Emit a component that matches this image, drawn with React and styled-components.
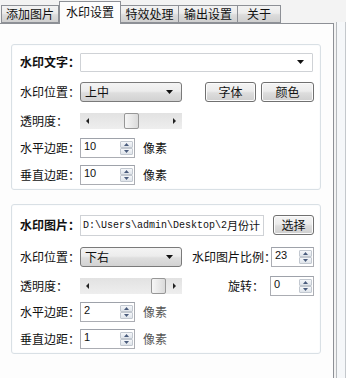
import React from "react";
import styled, { createGlobalStyle } from "styled-components";

const GlobalStyle = createGlobalStyle`
  html, body { margin: 0; padding: 0; background: #f3f3f3; }
  body {
    font-family: "Noto Sans CJK SC", "Liberation Sans", sans-serif;
    font-size: 12px;
    color: #111;
  }
  * { box-sizing: border-box; }
`;

const Root = styled.div`
  width: 346px;
  height: 378px;
  display: flex;
  overflow: hidden;
  background: #f3f3f3;
`;

const Main = styled.div`
  width: 334px;
  display: flex;
  flex-direction: column;
`;

const TabBar = styled.div`
  height: 23px;
  display: flex;
  align-items: flex-end;
  padding-left: 1px;
`;

const Tab = styled.div`
  position: relative;
  z-index: ${(p) => (p.$active ? 2 : 1)};
  width: ${(p) => p.$w}px;
  height: ${(p) => (p.$active ? 23 : 18)}px;
  margin-bottom: ${(p) => (p.$active ? -1 : 0)}px;
  border: 1px solid #8d9096;
  border-bottom: ${(p) => (p.$active ? "none" : "1px solid #8d9096")};
  border-left: ${(p) => (p.$first || p.$active ? "1px solid #8d9096" : "none")};
  background: ${(p) =>
    p.$active ? "#fdfdfd" : "linear-gradient(#f3f3f3 0%, #ebebeb 45%, #dcdcdc 55%, #cfcfcf 100%)"};
  display: flex;
  align-items: center;
  justify-content: center;
  padding-bottom: ${(p) => (p.$active ? 3 : 0)}px;
  font-size: 12px;
  line-height: 14px;
  color: #111;
  white-space: nowrap;
`;

const Panel = styled.div`
  flex: 1;
  background: #fdfdfd;
  border-top: 1px solid #8d9096;
  border-right: 1px solid #8d9096;
  padding: 20px 0 0 11px;
`;

const Strip = styled.div`
  flex: 1;
  margin: 22px 0 0 2px;
  border-left: 1px solid #b5b9bd;
  border-right: 1px solid #c4c8cc;
  background: #f5f7f9;
`;

const Group = styled.div`
  width: 310px;
  margin-top: ${(p) => p.$mt || 0}px;
  border: 1px solid #d9e0e5;
  border-radius: 3px;
  background: #ffffff;
  box-shadow: inset 0 0 0 1px #fbfcfd;
  padding: ${(p) => p.$pt}px 6px 3px 8px;
`;

const Row = styled.div`
  display: flex;
  align-items: center;
  height: 22px;
  margin-top: ${(p) => p.$mt || 0}px;
`;

const Label = styled.div`
  width: ${(p) => p.$w || 60}px;
  flex: none;
  font-size: 12px;
  line-height: 14px;
  font-weight: ${(p) => (p.$bold ? 700 : 400)};
  color: #111;
  white-space: nowrap;
  margin-right: ${(p) => p.$mr || 0}px;
`;

const RightPart = styled.div`
  flex: 1;
  display: flex;
  align-items: center;
  justify-content: flex-end;
`;

const Combo = styled.div`
  width: ${(p) => p.$w}px;
  height: ${(p) => p.$h || 20}px;
  flex: none;
  display: flex;
  align-items: center;
  justify-content: space-between;
  padding: 0 8px 0 4px;
  border: 1px solid ${(p) => (p.$plain ? "#cfd2d6" : "#7a7a7a")};
  border-radius: ${(p) => (p.$plain ? 1 : 3)}px;
  background: ${(p) =>
    p.$plain ? "#ffffff" : "linear-gradient(#f4f4f4 0%, #ececec 45%, #dedede 55%, #d2d2d2 100%)"};
  font-size: 12px;
  line-height: 14px;
`;

const Arrow = () => (
  <svg width="7" height="4" viewBox="0 0 7 4">
    <path d="M0 0 H7 L3.5 4 Z" fill="#111" />
  </svg>
);

const Button = styled.div`
  width: ${(p) => p.$w}px;
  height: 20px;
  flex: none;
  margin-left: ${(p) => p.$ml || 0}px;
  border: 1px solid #707070;
  border-radius: 3px;
  background: linear-gradient(#f4f4f4 0%, #ececec 45%, #dddddd 55%, #cfcfcf 100%);
  box-shadow: inset 0 0 0 1px #fbfbfb;
  display: flex;
  align-items: center;
  justify-content: center;
  font-size: 12px;
  line-height: 14px;
`;

const Slider = styled.div`
  position: relative;
  width: 102px;
  height: 16px;
  flex: none;
  background: linear-gradient(#e2e2e2, #eeeeee);
  display: flex;
  align-items: center;
  justify-content: space-between;
  padding: 0 6px;
`;

const Thumb = styled.div`
  position: absolute;
  top: 0;
  width: 15px;
  height: 16px;
  border: 1px solid #979797;
  border-radius: 2px;
  background: linear-gradient(90deg, #f6f6f6, #e6e6e6 60%, #dadada);
`;

const SmallTri = ({ dir }) => (
  <svg width="3" height="6" viewBox="0 0 3 6">
    <path d={dir === "left" ? "M3 0 V6 L0 3 Z" : "M0 0 V6 L3 3 Z"} fill="#222" />
  </svg>
);

const Spin = styled.div`
  width: ${(p) => p.$w}px;
  height: 20px;
  flex: none;
  border: 1px solid #abadb3;
  border-top-color: #9ea2aa;
  background: #fff;
  display: flex;
  align-items: stretch;
`;

const SpinValue = styled.div`
  flex: 1;
  padding: 1px 0 0 3px;
  font-family: "Liberation Sans", sans-serif;
  font-size: 11px;
  line-height: 13px;
  color: #111;
`;

const SpinButtons = styled.div`
  width: 13px;
  margin: 2px 1px 2px 0;
  display: flex;
  flex-direction: column;
  gap: 0;
`;

const SpinBtn = styled.div`
  flex: 1;
  border: 1px solid #c2c8d0;
  border-radius: 1px;
  background: linear-gradient(#f5f7fa, #dfe4ea);
  display: flex;
  align-items: center;
  justify-content: center;
`;

const SpinTri = ({ up }) => (
  <svg width="5" height="3" viewBox="0 0 5 3">
    <path d={up ? "M0 3 H5 L2.5 0 Z" : "M0 0 H5 L2.5 3 Z"} fill="#4a5c7c" />
  </svg>
);

const Unit = styled.div`
  margin-left: 8px;
  font-size: 12px;
  line-height: 14px;
  color: ${(p) => (p.$faded ? "#555" : "#111")};
`;

const PathField = styled.div`
  width: 184px;
  height: 21px;
  flex: none;
  border: 1px solid #cfd2d6;
  background: #fff;
  display: flex;
  align-items: center;
  padding-left: 2px;
  overflow: hidden;
  white-space: nowrap;
  font-family: "Liberation Mono", "Noto Sans CJK SC", monospace;
  font-size: 10px;
  color: #111;
`;

const Cjk = styled.span`
  font-family: "Noto Sans CJK SC", sans-serif;
  font-size: 11px;
`;

const SpinBox = ({ w, value }) => (
  <Spin $w={w}>
    <SpinValue>{value}</SpinValue>
    <SpinButtons>
      <SpinBtn><SpinTri up /></SpinBtn>
      <SpinBtn><SpinTri /></SpinBtn>
    </SpinButtons>
  </Spin>
);

const Track = ({ pos }) => (
  <Slider>
    <SmallTri dir="left" />
    <Thumb style={{ left: pos }} />
    <SmallTri dir="right" />
  </Slider>
);

export default function App() {
  return (
    <>
      <GlobalStyle />
      <Root>
        <Main>
          <TabBar>
            <Tab $w={58} $first>添加图片</Tab>
            <Tab $w={62} $active>水印设置</Tab>
            <Tab $w={58}>特效处理</Tab>
            <Tab $w={59}>输出设置</Tab>
            <Tab $w={43}>关于</Tab>
          </TabBar>
          <Panel>
            <Group $pt={6}>
              <Row>
                <Label $bold>水印文字：</Label>
                <Combo $w={233} $h={19} $plain>
                  <span />
                  <Arrow />
                </Combo>
              </Row>
              <Row $mt={8}>
                <Label>水印位置：</Label>
                <Combo $w={102}>
                  <span>上中</span>
                  <Arrow />
                </Combo>
                <RightPart>
                  <Button $w={51}>字体</Button>
                  <Button $w={53} $ml={5}>颜色</Button>
                </RightPart>
              </Row>
              <Row $mt={7}>
                <Label>透明度：</Label>
                <Track pos={44} />
              </Row>
              <Row $mt={5}>
                <Label>水平边距：</Label>
                <SpinBox w={55} value="10" />
                <Unit>像素</Unit>
              </Row>
              <Row $mt={5}>
                <Label>垂直边距：</Label>
                <SpinBox w={55} value="10" />
                <Unit>像素</Unit>
              </Row>
            </Group>
            <Group $pt={9} $mt={14}>
              <Row>
                <Label $bold>水印图片：</Label>
                <PathField>
                  D:\Users\admin\Desktop\2<Cjk>月份计</Cjk>
                </PathField>
                <Button $w={41} $ml={9}>选择</Button>
              </Row>
              <Row $mt={10}>
                <Label>水印位置：</Label>
                <Combo $w={102}>
                  <span>下右</span>
                  <Arrow />
                </Combo>
                <RightPart>
                  <Label $w={79}>水印图片比例：</Label>
                  <SpinBox w={43} value="23" />
                </RightPart>
              </Row>
              <Row $mt={7}>
                <Label>透明度：</Label>
                <Track pos={71} />
                <RightPart>
                  <Label $w={36} $mr={6}>旋转：</Label>
                  <SpinBox w={44} value="0" />
                </RightPart>
              </Row>
              <Row $mt={4}>
                <Label>水平边距：</Label>
                <SpinBox w={55} value="2" />
                <Unit $faded>像素</Unit>
              </Row>
              <Row $mt={5}>
                <Label>垂直边距：</Label>
                <SpinBox w={55} value="1" />
                <Unit $faded>像素</Unit>
              </Row>
            </Group>
          </Panel>
        </Main>
        <Strip />
      </Root>
    </>
  );
}
